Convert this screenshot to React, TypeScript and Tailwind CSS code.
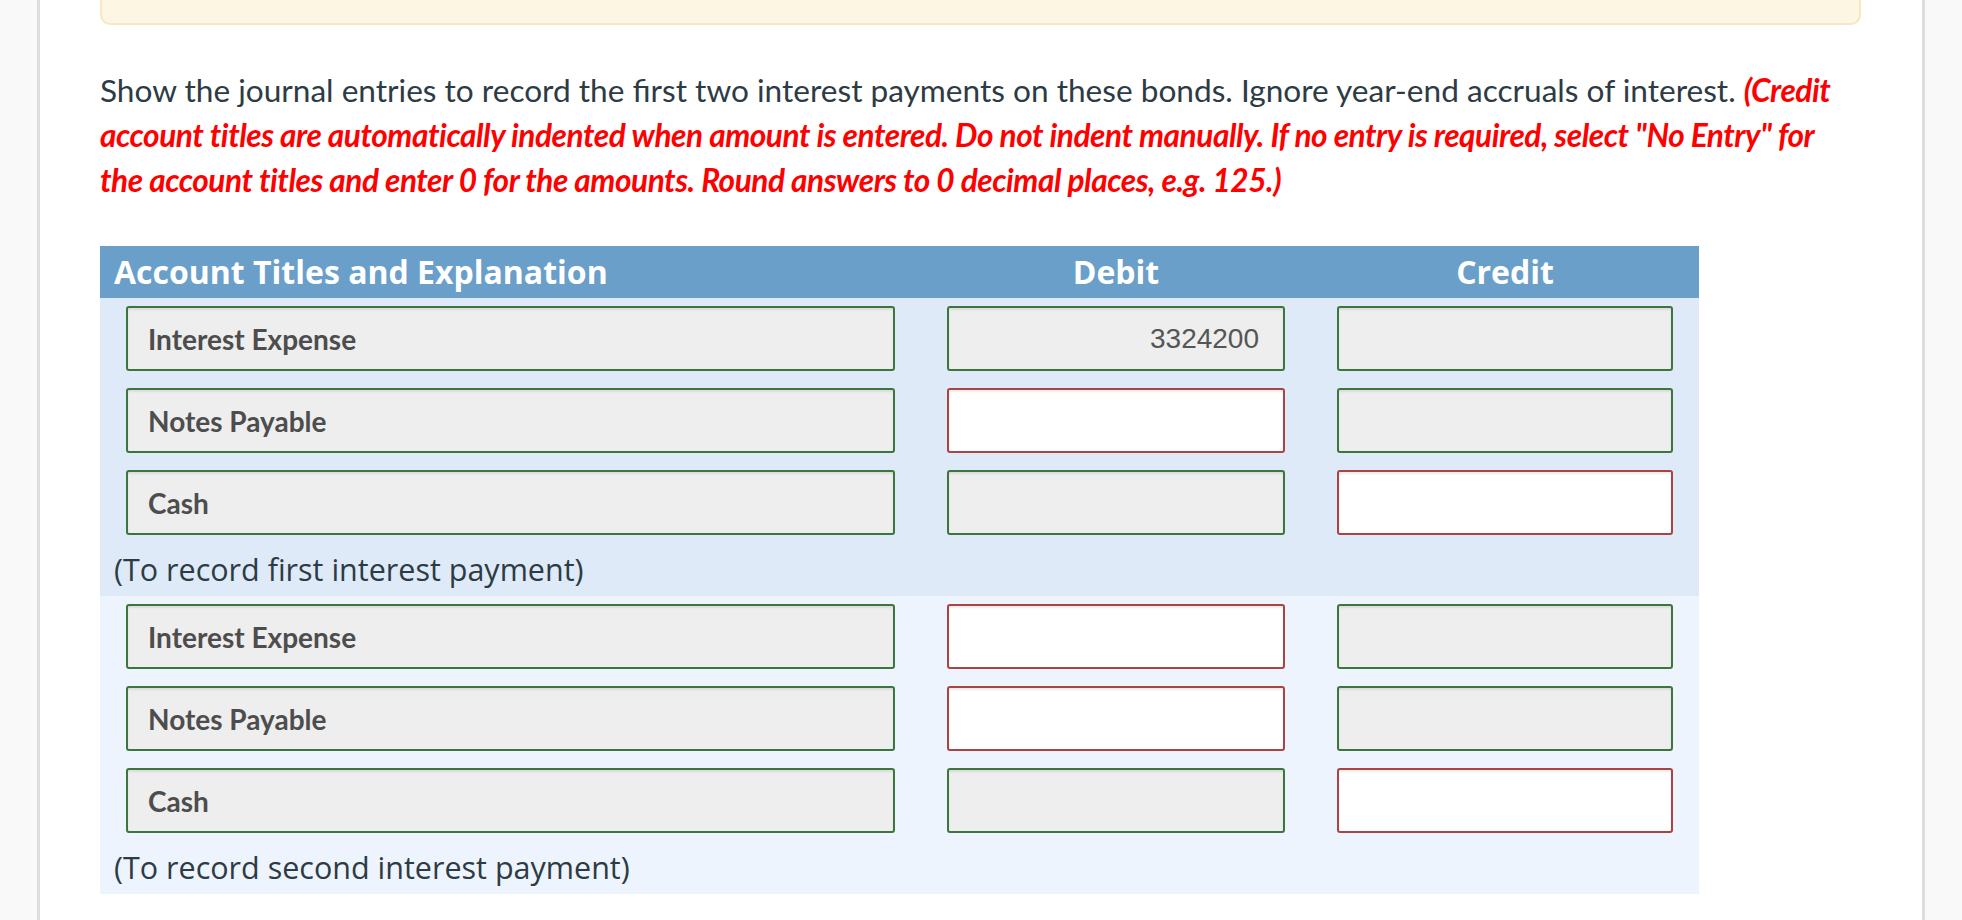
import React from "react";

type Cell = { value?: string; error?: boolean };
type Line = { account: string; debit: Cell; credit: Cell };
type Entry = { lines: Line[]; note: string; bg: string };

const entries: Entry[] = [
  {
    bg: "bg-[#deeaf7]",
    note: "(To record first interest payment)",
    lines: [
      { account: "Interest Expense", debit: { value: "3324200" }, credit: {} },
      { account: "Notes Payable", debit: { error: true }, credit: {} },
      { account: "Cash", debit: {}, credit: { error: true } },
    ],
  },
  {
    bg: "bg-[#edf4fd]",
    note: "(To record second interest payment)",
    lines: [
      { account: "Interest Expense", debit: { error: true }, credit: {} },
      { account: "Notes Payable", debit: { error: true }, credit: {} },
      { account: "Cash", debit: {}, credit: { error: true } },
    ],
  },
];

const AmountBox = ({ cell }: { cell: Cell }) => (
  <div
    className={
      cell.error
        ? "h-[65px] rounded-[3px] border-2 border-[#a94442] bg-white shadow-[inset_0_2px_2px_rgba(0,0,0,0.075)]"
        : "h-[65px] rounded-[3px] border-2 border-[#3c763d] bg-[#eeeeee] shadow-[inset_0_2px_2px_rgba(0,0,0,0.075)] flex items-center justify-end pr-[24px] text-[28px] text-[#555555] font-['Liberation_Sans',Arial,sans-serif]"
    }
  >
    {cell.value}
  </div>
);

const App = () => {
  return (
    <div className="flex min-h-screen bg-[#f9f9f9]">
      <div className="w-[37px] shrink-0" />
      <main className="w-[1888px] shrink-0 min-h-screen bg-white border-x-[3px] border-[#dddddd] pl-[60px] pr-[61px] font-['Lato',sans-serif]">
        <div className="h-[25px] rounded-b-[10px] border-x-2 border-b-2 border-[#f6e7c5] bg-[#fdf6e3]" />

        <p className="mt-[43px] text-[31.6px] leading-[45px] text-[#2d3b45]">
          Show the journal entries to record the first two interest payments on these bonds. Ignore year-end
          accruals of interest.{" "}
          <span className="font-bold italic tracking-[-0.45px] text-[#ff0000]">
            (Credit account titles are automatically indented when amount is entered. Do not indent manually. If
            no entry is required, select "No Entry" for the account titles and enter 0 for the amounts. Round
            answers to 0 decimal places, e.g. 125.)
          </span>
        </p>

        <div className="mt-[43px] w-[1599px]">
          <div className="grid h-[52px] grid-cols-[821px_390px_388px] items-center bg-[#6a9fca] text-[32px] font-bold text-white font-['Open_Sans',sans-serif]">
            <div className="pl-[14px]">Account Titles and Explanation</div>
            <div className="text-center">Debit</div>
            <div className="text-center">Credit</div>
          </div>

          {entries.map((entry, i) => (
            <div key={i} className={entry.bg}>
              {entry.lines.map((line, j) => (
                <div key={j} className="grid grid-cols-[821px_390px_388px] pt-[8px] pb-[9px]">
                  <div className="px-[26px]">
                    <div className="flex h-[65px] items-center rounded-[3px] border-2 border-[#3c763d] bg-[#eeeeee] pl-[20px] text-[28px] font-bold text-[#4d4d4d] shadow-[inset_0_2px_2px_rgba(0,0,0,0.075)]">
                      {line.account}
                    </div>
                  </div>
                  <div className="px-[26px]">
                    <AmountBox cell={line.debit} />
                  </div>
                  <div className="px-[26px]">
                    <AmountBox cell={line.credit} />
                  </div>
                </div>
              ))}
              <div className="flex h-[52px] items-center pl-[14px] text-[30.5px] text-[#2d3b45] font-['Open_Sans',sans-serif]">
                {entry.note}
              </div>
            </div>
          ))}
        </div>
      </main>
      <div className="flex-1" />
    </div>
  );
};

export default App;
